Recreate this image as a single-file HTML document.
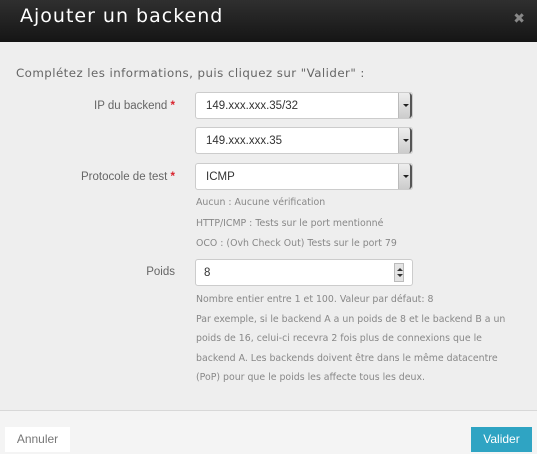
<!DOCTYPE html>
<html><head><meta charset="utf-8"><style>
*{margin:0;padding:0;box-sizing:border-box}
body{width:537px;height:454px;overflow:hidden;background:#eee;font-family:"DejaVu Sans","Liberation Sans",sans-serif;position:relative}
.hd{position:absolute;left:0;top:0;width:537px;height:42px;background:linear-gradient(#2f2f2f,#151515);}
.hd h1{position:absolute;left:20px;top:5px;font-size:19px;font-weight:normal;color:#fff;letter-spacing:1px}
.x{position:absolute;right:12px;top:11px;color:#888;font-size:14px;font-weight:bold}
.intro{position:absolute;left:16px;top:66px;font-size:11.8px;color:#666;letter-spacing:0.45px}
.lbl{position:absolute;right:362px;font-size:11.5px;color:#666;font-family:"Liberation Sans",sans-serif;text-align:right;white-space:nowrap}
.lbl b{color:#d9232d}
.in{position:absolute;left:195px;width:218px;height:27px;background:#fff;border:1px solid #ccc;border-radius:3px;font-family:"Liberation Sans",sans-serif;font-size:11.5px;color:#333;padding:7px 10px}
.dd{position:absolute;right:0;top:0;width:14px;height:25px;background:linear-gradient(#eee,#ccc);border-left:1px solid #bbb;border-right:2px solid #555;border-radius:0 3px 3px 0}
.dd:after{content:"";position:absolute;left:4px;top:11px;border:3px solid transparent;border-top:3px solid #222}
.sp{position:absolute;right:8px;top:3px;width:10px;height:19px;background:#e4e4e4;border:1px solid #bbb}
.sp:before{content:"";position:absolute;left:2px;top:1px;border:3px solid transparent;border-bottom:3px solid #333}
.sp:after{content:"";position:absolute;left:2px;top:10px;border:3px solid transparent;border-top:3px solid #333}
.help{position:absolute;left:196px;font-size:9.4px;color:#888;line-height:19.5px}
.ft{position:absolute;left:0;top:410px;width:537px;height:44px;background:#f4f4f4;border-top:1px solid #d8d8d8}
.btn{position:absolute;top:16px;height:25px;font-family:"Liberation Sans",sans-serif;font-size:12px;padding:5px 0;text-align:center}
</style></head><body>
<div class="hd"><h1>Ajouter un backend</h1><div class="x">✖</div></div>
<div class="intro">Complétez les informations, puis cliquez sur "Valider" :</div>
<div class="lbl" style="top:100px">IP du backend <b>*</b></div>
<div class="in" style="top:92px">149.xxx.xxx.35/32<div class="dd"></div></div>
<div class="in" style="top:127px">149.xxx.xxx.35<div class="dd"></div></div>
<div class="lbl" style="top:171px">Protocole de test <b>*</b></div>
<div class="in" style="top:163px">ICMP<div class="dd"></div></div>
<div class="help" style="top:193px;line-height:20.5px">Aucun : Aucune vérification<br>HTTP/ICMP : Tests sur le port mentionné<br>OCO : (Ovh Check Out) Tests sur le port 79</div>
<div class="lbl" style="top:266px">Poids</div>
<div class="in" style="top:259px;padding-left:8px">8<div class="sp"></div></div>
<div class="help" style="top:290px">Nombre entier entre 1 et 100. Valeur par défaut: 8<br>Par exemple, si le backend A a un poids de 8 et le backend B a un<br>poids de 16, celui-ci recevra 2 fois plus de connexions que le<br>backend A. Les backends doivent être dans le même datacentre<br>(PoP) pour que le poids les affecte tous les deux.</div>
<div class="ft">
<div class="btn" style="left:5px;width:65px;background:#fff;color:#777">Annuler</div>
<div class="btn" style="left:471px;width:61px;background:#2fa4c3;color:#fff">Valider</div>
</div>
</body></html>
